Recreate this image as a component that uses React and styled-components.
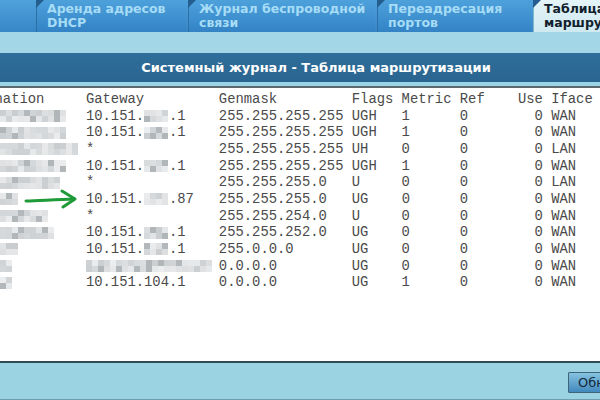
import React from "react";
import styled, { createGlobalStyle } from "styled-components";

const GlobalStyle = createGlobalStyle`
  html, body {
    margin: 0;
    padding: 0;
    width: 600px;
    height: 400px;
    overflow: hidden;
    background: #ffffff;
  }
`;

const Page = styled.div`
  width: 600px;
  height: 400px;
  display: flex;
  flex-direction: column;
  overflow: hidden;
  font-family: "DejaVu Sans", Verdana, sans-serif;
`;

const TabBar = styled.div`
  height: 32px;
  flex: none;
  display: flex;
  align-items: stretch;
  background: linear-gradient(#4fa2dc, #3786c6);
  padding-left: 36px;
  gap: 2px;
  overflow: hidden;
`;

const Tab = styled.div`
  position: relative;
  flex: none;
  width: ${(p) => p.$w}px;
  padding: 2px 0 0 10px;
  box-sizing: border-box;
  font-size: 12.5px;
  font-weight: bold;
  line-height: 14px;
  white-space: nowrap;
  color: ${(p) => (p.$active ? "#10202c" : "#a6dcf6")};
  background: ${(p) =>
    p.$active
      ? "linear-gradient(#e4f4f8, #cfe9f1)"
      : "linear-gradient(#4da1db, #3383c5)"};
  border-left: 1px solid ${(p) => (p.$active ? "#7fb7cf" : "#2d6fa6")};
  &::before {
    content: "";
    position: absolute;
    left: -1px;
    top: 0;
    border-top: 8px solid #255e8e;
    border-right: 8px solid transparent;
  }
`;

const Band = styled.div`
  height: 21px;
  flex: none;
  background: #a3d7e7;
`;

const TitleBar = styled.div`
  height: 29px;
  flex: none;
  display: flex;
  align-items: center;
  justify-content: center;
  padding-left: 32px;
  background: linear-gradient(#2f6e9b, #2a6590);
  color: #ffffff;
  font-size: 13px;
  font-weight: bold;
  border-bottom: 4px solid #9ad4e6;
`;

const TableArea = styled.div`
  position: relative;
  flex: 1;
  background: #ffffff;
  border-top: 2px solid #5c6a70;
  overflow: hidden;
  padding-top: 3px;
`;

const Lines = styled.div`
  margin-left: -47px;
  font-family: "Liberation Mono", "Courier New", monospace;
  font-size: 13.85px;
  line-height: 16.67px;
  color: #4a4a4a;
  white-space: pre;
`;

const Line = styled.div`
  display: flex;
  align-items: center;
  height: 16.67px;
`;

const DestCell = styled.span`
  flex: none;
  width: 16ch;
  padding-left: 47px;
  box-sizing: border-box;
  display: flex;
  align-items: center;
`;

const BlurSlot = styled.span`
  display: inline-flex;
  width: ${(p) => p.$chars}ch;
`;

const Mosaic = styled.span`
  display: inline-grid;
  grid-template-columns: repeat(${(p) => p.$cols}, 6px);
  grid-auto-rows: 6px;
  vertical-align: middle;
  filter: blur(0.6px);
`;

const Pixel = styled.span`
  background: hsl(205, 6%, ${(p) => p.$l}%);
`;

const Arrow = styled.svg`
  position: absolute;
  left: 24px;
  top: 101px;
`;

const Footer = styled.div`
  height: 36px;
  flex: none;
  display: flex;
  align-items: center;
  background: #9cd3e3;
  border-top: 2px solid #2e4a55;
  border-bottom: 1px solid #6e9fb0;
  padding-left: 568px;
`;

const Button = styled.button`
  flex: none;
  height: 21px;
  padding: 0 9px;
  margin-top: 2px;
  font-family: "DejaVu Sans", Tahoma, sans-serif;
  font-size: 13px;
  color: #14283a;
  background: linear-gradient(#86c2e0, #4289bd);
  border: 1px solid #3f6478;
  border-radius: 1px;
  white-space: nowrap;
`;

const rand = (s) => {
  const x = Math.sin(s * 127.1 + 311.7) * 43758.5453;
  return x - Math.floor(x);
};

const Blur = ({ width, seed }) => {
  const cols = Math.max(1, Math.round(width / 6));
  const cells = [];
  for (let i = 0; i < cols * 2; i++) {
    const r = rand(seed * 50 + i);
    const l = r > 0.85 ? 62 + r * 10 : 80 + r * 15;
    cells.push(<Pixel key={i} $l={l.toFixed(0)} />);
  }
  return <Mosaic $cols={cols}>{cells}</Mosaic>;
};

const rows = [
  { d: 68, gw: ["10.151.", 3, ".1"], m: "255.255.255.255", f: "UGH", me: "1", i: "WAN" },
  { d: 68, gw: ["10.151.", 3, ".1"], m: "255.255.255.255", f: "UGH", me: "1", i: "WAN" },
  { d: 80, gw: ["*"], m: "255.255.255.255", f: "UH", me: "0", i: "LAN" },
  { d: 68, gw: ["10.151.", 3, ".1"], m: "255.255.255.255", f: "UGH", me: "1", i: "WAN" },
  { d: 60, gw: ["*"], m: "255.255.255.0", f: "U", me: "0", i: "LAN" },
  { d: 18, gw: ["10.151.", 3, ".87"], m: "255.255.255.0", f: "UG", me: "0", i: "WAN" },
  { d: 50, gw: ["*"], m: "255.255.254.0", f: "U", me: "0", i: "WAN" },
  { d: 52, gw: ["10.151.", 3, ".1"], m: "255.255.252.0", f: "UG", me: "0", i: "WAN" },
  { d: 18, gw: ["10.151.", 3, ".1"], m: "255.0.0.0", f: "UG", me: "0", i: "WAN" },
  { d: 12, gw: [15], m: "0.0.0.0", f: "UG", me: "0", i: "WAN" },
  { d: 12, gw: ["10.151.104.1"], m: "0.0.0.0", f: "UG", me: "1", i: "WAN" },
];

const Gateway = ({ parts, seed }) => {
  let len = 0;
  const out = parts.map((p, k) => {
    if (typeof p === "number") {
      len += p;
      return (
        <BlurSlot key={k} $chars={p}>
          <Blur width={p * 8.3} seed={seed + k} />
        </BlurSlot>
      );
    }
    len += p.length;
    return <span key={k}>{p}</span>;
  });
  out.push(<span key="pad">{" ".repeat(Math.max(1, 16 - len))}</span>);
  return out;
};

const rest = (r) =>
  r.m.padEnd(16) + r.f.padEnd(6) + r.me.padEnd(7) + "0".padEnd(7) + "0".padStart(3) + " " + r.i;

const App = () => {
  return (
    <Page>
      <GlobalStyle />
      <TabBar>
        <Tab $w={150}>
          Аренда адресов
          <br />
          DHCP
        </Tab>
        <Tab $w={187}>
          Журнал беспроводной
          <br />
          связи
        </Tab>
        <Tab $w={154}>
          Переадресация
          <br />
          портов
        </Tab>
        <Tab $w={120} $active>
          Таблица
          <br />
          маршрутизации
        </Tab>
      </TabBar>
      <Band />
      <TitleBar>Системный журнал - Таблица маршрутизации</TitleBar>
      <TableArea>
        <Lines>
          <Line>Destination     Gateway         Genmask         Flags Metric Ref    Use Iface</Line>
          {rows.map((r, n) => (
            <Line key={n}>
              <DestCell>
                <Blur width={r.d} seed={n + 1} />
              </DestCell>
              <Gateway parts={r.gw} seed={n * 7 + 3} />
              <span>{rest(r)}</span>
            </Line>
          ))}
        </Lines>
        <Arrow width="56" height="20" viewBox="0 0 56 20">
          <path
            d="M2 12 C 16 11.5, 34 10.5, 50 10"
            fill="none"
            stroke="#1f9a38"
            strokeWidth="3"
            strokeLinecap="round"
          />
          <path
            d="M38 2 L51 10 L39 18"
            fill="none"
            stroke="#1f9a38"
            strokeWidth="3"
            strokeLinecap="round"
            strokeLinejoin="round"
          />
        </Arrow>
      </TableArea>
      <Footer>
        <Button>Обновить</Button>
      </Footer>
    </Page>
  );
};

export default App;
